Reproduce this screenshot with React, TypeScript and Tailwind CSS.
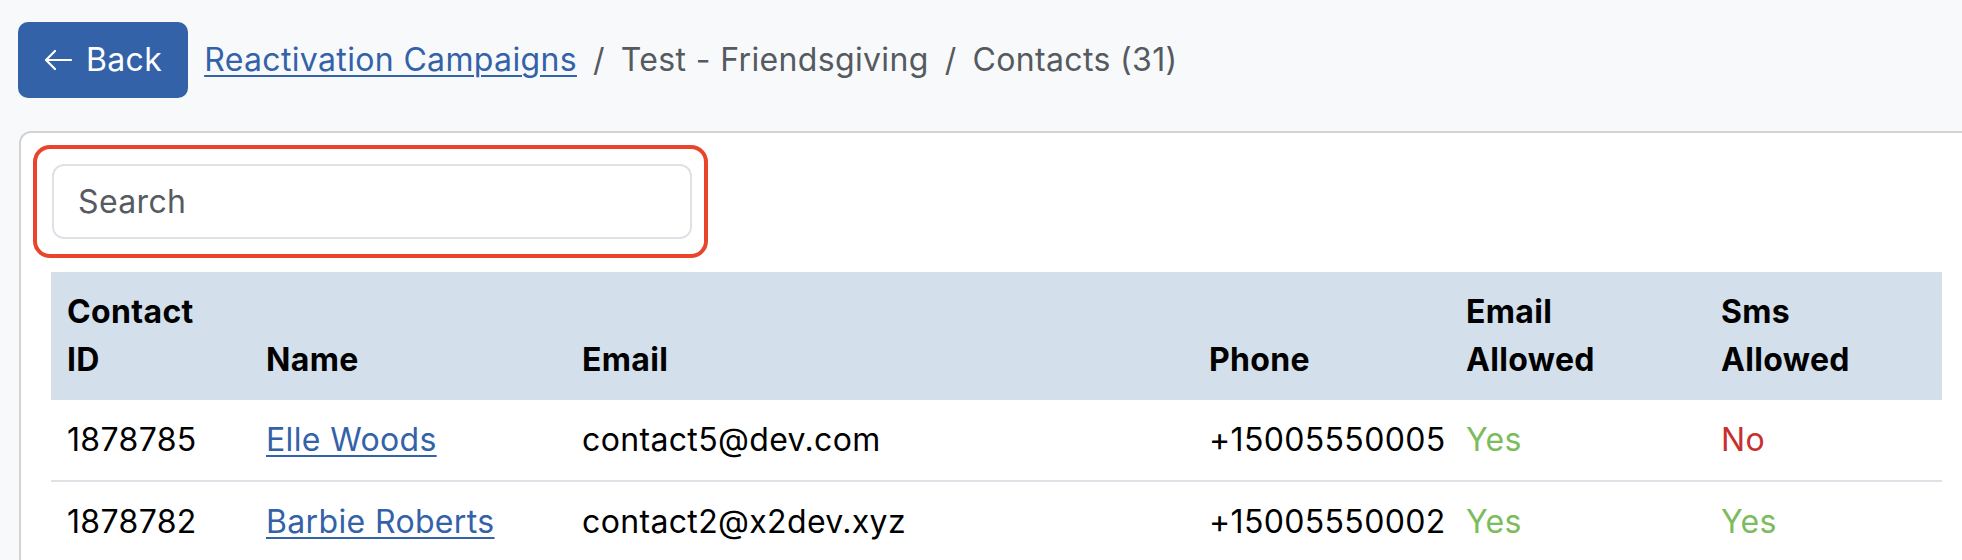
import React from 'react'

type Contact = {
  id: string
  name: string
  email: string
  phone: string
  emailAllowed: boolean
  smsAllowed: boolean
}

const contacts: Contact[] = [
  { id: '1878785', name: 'Elle Woods', email: 'contact5@dev.com', phone: '+15005550005', emailAllowed: true, smsAllowed: false },
  { id: '1878782', name: 'Barbie Roberts', email: 'contact2@x2dev.xyz', phone: '+15005550002', emailAllowed: true, smsAllowed: true },
]

const Allowed: React.FC<{ value: boolean }> = ({ value }) =>
  value ? <span className="text-[#7cbc5c]">Yes</span> : <span className="text-[#c8302e]">No</span>

const App: React.FC = () => {
  return (
    <div className="min-h-[560px] overflow-hidden bg-[#f8f9fb] pl-[18px] pt-[22px] font-['Inter','Liberation_Sans',sans-serif] text-[32px] leading-[48px] tracking-[0.35px] text-black">
      {/* top bar */}
      <div className="flex items-center">
        <button className="flex items-center gap-[14px] rounded-[10px] border-2 border-[#3362a9] bg-[#3362a9] px-[24px] py-[12px] text-white">
          <svg width="28" height="22" viewBox="0 0 28 22" fill="none" stroke="currentColor" strokeWidth="2.2" strokeLinecap="round" strokeLinejoin="round">
            <path d="M27 11H2M11 2L2 11l9 9" />
          </svg>
          <span>Back</span>
        </button>
        <nav className="ml-[16px] flex items-center text-[#555a60]">
          <a className="text-[#3362a9] underline decoration-2 underline-offset-[4px]" href="#">
            Reactivation Campaigns
          </a>
          <span className="px-[16px]">/</span>
          <span>Test - Friendsgiving</span>
          <span className="px-[16px]">/</span>
          <span>Contacts (31)</span>
        </nav>
      </div>

      {/* card */}
      <div className="ml-px mt-[33px] w-[1956px] rounded-t-[12px] border-2 border-[#d3d3d3] bg-white pl-[12px] pt-[12px]">
        <div className="w-[675px] rounded-[17px] border-4 border-[#e8452c] p-[15px]">
          <input
            className="h-[75px] w-[640px] rounded-[12px] border-2 border-[#dee2e6] px-[24px] text-black outline-none placeholder:text-[#565b62]"
            placeholder="Search"
          />
        </div>

        <table className="ml-[18px] mt-[14px] w-[1891px] table-fixed border-collapse text-left">
          <colgroup>
            <col className="w-[199px]" />
            <col className="w-[316px]" />
            <col className="w-[627px]" />
            <col className="w-[257px]" />
            <col className="w-[255px]" />
            <col />
          </colgroup>
          <thead className="bg-[#d3dfea]">
            <tr className="font-bold">
              <th className="px-[16px] py-[16px] align-bottom">
                Contact
                <br />
                ID
              </th>
              <th className="px-[16px] py-[16px] align-bottom">Name</th>
              <th className="px-[16px] py-[16px] align-bottom">Email</th>
              <th className="px-[16px] py-[16px] align-bottom">Phone</th>
              <th className="px-[16px] py-[16px] align-bottom">
                Email
                <br />
                Allowed
              </th>
              <th className="px-[16px] py-[16px] align-bottom">
                Sms
                <br />
                Allowed
              </th>
            </tr>
          </thead>
          <tbody>
            {contacts.map((c) => (
              <tr key={c.id} className="border-b-2 border-[#dee2e6]">
                <td className="px-[16px] py-[16px]">{c.id}</td>
                <td className="px-[16px] py-[16px]">
                  <a className="text-[#3362a9] underline decoration-2 underline-offset-[4px]" href="#">
                    {c.name}
                  </a>
                </td>
                <td className="px-[16px] py-[16px]">{c.email}</td>
                <td className="px-[16px] py-[16px]">{c.phone}</td>
                <td className="px-[16px] py-[16px]">
                  <Allowed value={c.emailAllowed} />
                </td>
                <td className="px-[16px] py-[16px]">
                  <Allowed value={c.smsAllowed} />
                </td>
              </tr>
            ))}
          </tbody>
        </table>
      </div>
    </div>
  )
}

export default App
